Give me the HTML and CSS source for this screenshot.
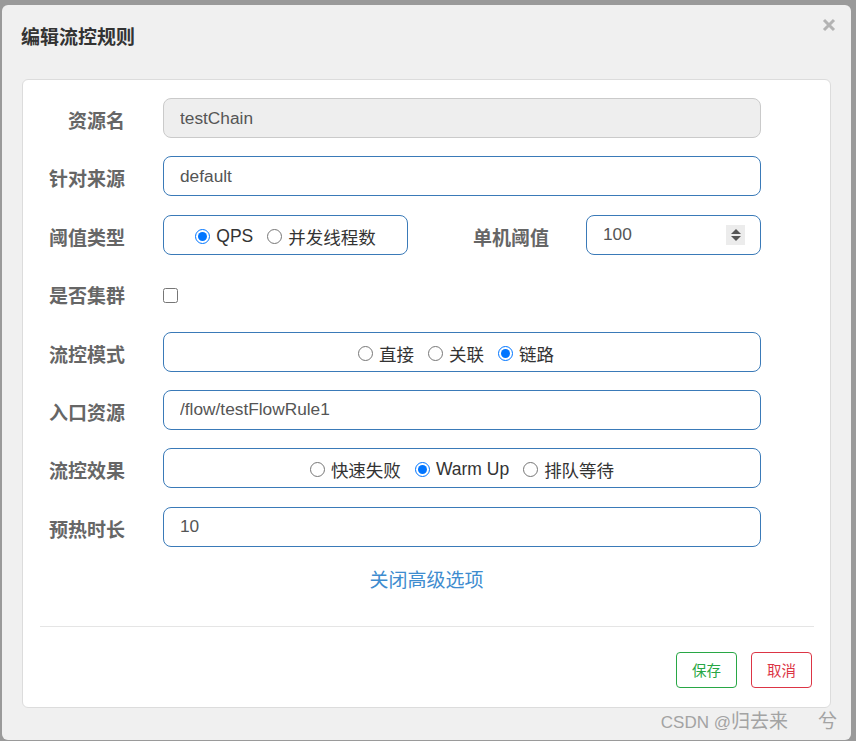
FILE: index.html
```html
<!DOCTYPE html>
<html lang="zh-CN">
<head>
<meta charset="utf-8">
<title>编辑流控规则</title>
<link rel="stylesheet" href="styles.css">
</head>
<body>
<div class="modal">
  <div class="modal-header">
    <h4 class="modal-title">编辑流控规则</h4>
    <span class="close"><svg width="14" height="14" viewBox="0 0 14 14"><path d="M2 2L12 12M12 2L2 12" stroke="#b3b3b3" stroke-width="3" stroke-linecap="butt"/></svg></span>
  </div>
  <div class="card">
    <form class="form">
      <div class="row">
        <label class="lbl">资源名</label>
        <input class="ctl disabled" value="testChain" readonly>
      </div>
      <div class="row">
        <label class="lbl">针对来源</label>
        <input class="ctl" value="default">
      </div>
      <div class="row">
        <label class="lbl">阈值类型</label>
        <div class="split">
          <div class="radio-box narrow">
            <label class="opt"><input type="radio" name="grade" checked>QPS</label>
            <label class="opt"><input type="radio" name="grade">并发线程数</label>
          </div>
          <label class="lbl sub">单机阈值</label>
          <div class="num-wrap">
            <input class="ctl" value="100">
            <span class="spin"></span>
          </div>
        </div>
      </div>
      <div class="row">
        <label class="lbl">是否集群</label>
        <div class="check-cell"><input type="checkbox" class="chk"></div>
      </div>
      <div class="row">
        <label class="lbl">流控模式</label>
        <div class="radio-box shifted">
          <label class="opt"><input type="radio" name="strategy">直接</label>
          <label class="opt"><input type="radio" name="strategy">关联</label>
          <label class="opt"><input type="radio" name="strategy" checked>链路</label>
        </div>
      </div>
      <div class="row">
        <label class="lbl">入口资源</label>
        <input class="ctl" value="/flow/testFlowRule1">
      </div>
      <div class="row">
        <label class="lbl">流控效果</label>
        <div class="radio-box">
          <label class="opt"><input type="radio" name="behavior">快速失败</label>
          <label class="opt"><input type="radio" name="behavior" checked>Warm Up</label>
          <label class="opt"><input type="radio" name="behavior">排队等待</label>
        </div>
      </div>
      <div class="row last">
        <label class="lbl">预热时长</label>
        <input class="ctl" value="10">
      </div>
    </form>
    <div class="toggle"><a class="toggle-link">关闭高级选项</a></div>
    <hr class="divider">
    <div class="footer">
      <button class="btn save" type="button">保存</button>
      <button class="btn cancel" type="button">取消</button>
    </div>
  </div>
  <div class="watermark"><span class="wm-latin">CSDN @</span>归去来<span class="wm-gap">　</span>兮</div>
</div>
</body>
</html>
```
FILE: styles.css
```css
html, body {
  margin: 0;
  padding: 0;
}
body {
  background: #9a9a9a;
  height: 741px;
  overflow: hidden;
  font-family: "Liberation Sans", "Noto Sans CJK SC", sans-serif;
}
.modal {
  margin: 5px 0 0 2px;
  width: 849px;
  height: 735px;
  background: #f0f0f0;
  border-radius: 6px;
  display: flex;
  flex-direction: column;
}
.modal-header {
  height: 74px;
  box-sizing: border-box;
  display: flex;
  justify-content: space-between;
  align-items: flex-start;
  padding: 0 15px 0 19px;
}
.modal-title {
  margin: 0;
  padding-top: 21px;
  font-size: 19px;
  line-height: 20px;
  font-weight: bold;
  color: #333;
  font-family: "Noto Sans CJK SC", sans-serif;
}
.close {
  display: block;
  margin-top: 13px;
  width: 14px;
  height: 14px;
}
.close svg { display: block; }
.card {
  margin: 0 20px;
  height: 629px;
  box-sizing: border-box;
  background: #fff;
  border: 1px solid #dcdcdc;
  border-radius: 6px;
  padding-top: 18px;
}
.form {
  margin: 0;
  padding-right: 69px;
}
.row {
  display: grid;
  grid-template-columns: 102px 598px;
  column-gap: 38px;
  height: 40px;
  align-items: center;
  margin-bottom: 18.4px;
}
.row.last { margin-bottom: 0; }
.lbl {
  text-align: right;
  font-family: "Noto Sans CJK SC", sans-serif;
  font-weight: bold;
  font-size: 19px;
  color: #666;
  padding-top: 4px;
  line-height: 24px;
}
.ctl {
  box-sizing: border-box;
  width: 100%;
  height: 40px;
  margin: 0;
  border: 1px solid #3a7ab8;
  border-radius: 8px;
  padding: 0 16px;
  font-family: "Liberation Sans", "Noto Sans CJK SC", sans-serif;
  font-size: 17.3px;
  color: #555;
  background: #fff;
  outline: none;
}
.ctl.disabled {
  background: #eee;
  border-color: #cacaca;
}
.split {
  display: flex;
  align-items: center;
  height: 40px;
}
.radio-box {
  box-sizing: border-box;
  height: 40px;
  border: 1px solid #3a7ab8;
  border-radius: 8px;
  display: flex;
  justify-content: center;
  align-items: center;
  padding-top: 3px;
}
.radio-box.shifted {
  padding-right: 12px;
}
.radio-box.narrow {
  width: 245px;
  flex: none;
}
.opt {
  display: inline-flex;
  align-items: center;
  margin: 0 7px;
  font-size: 17.5px;
  color: #333;
  font-family: "Liberation Sans", "Noto Sans CJK SC", sans-serif;
}
.opt input {
  width: 15px;
  height: 15px;
  margin: 0 6px 0 0;
}
.lbl.sub {
  flex: 1;
  padding-right: 37px;
}
.num-wrap {
  position: relative;
  width: 175px;
  flex: none;
}
.spin {
  position: absolute;
  right: 16px;
  top: 10px;
  width: 19px;
  height: 20px;
  background: #ececec;
}
.spin::before,
.spin::after {
  content: "";
  position: absolute;
  left: 5px;
  width: 0;
  height: 0;
  border-left: 5px solid transparent;
  border-right: 5px solid transparent;
}
.spin::before {
  top: 4px;
  border-bottom: 5px solid #555;
}
.spin::after {
  top: 11px;
  border-top: 5px solid #555;
}
.check-cell {
  display: flex;
  align-items: center;
  height: 40px;
}
.chk {
  width: 15px;
  height: 15px;
  margin: 4px 0 0 0;
}
.toggle {
  text-align: center;
  margin-top: 20px;
  line-height: 24px;
}
.toggle-link {
  font-family: "Noto Sans CJK SC", sans-serif;
  font-size: 19px;
  color: #3e8ccf;
  text-decoration: none;
}
.divider {
  margin: 32px 16px 0 17px;
  border: 0;
  border-top: 1px solid #e5e5e5;
  height: 0;
}
.footer {
  display: flex;
  justify-content: flex-end;
  gap: 14px;
  padding-right: 18px;
  margin-top: 25px;
}
.btn {
  width: 61px;
  height: 36px;
  box-sizing: border-box;
  background: #fff;
  border-radius: 4px;
  font-family: "Noto Sans CJK SC", sans-serif;
  font-size: 14.5px;
  padding: 0;
}
.btn.save {
  border: 1px solid #28a745;
  color: #28a745;
}
.btn.cancel {
  border: 1px solid #dc3545;
  color: #dc3545;
}
.watermark {
  text-align: right;
  padding-right: 14px;
  margin-top: 2px;
  line-height: 24px;
  font-size: 19px;
  color: #a3a3a3;
  font-family: "Liberation Sans", "Noto Sans CJK SC", sans-serif;
}
.wm-latin {
  font-size: 17px;
}
.wm-gap {
  display: inline-block;
  width: 30px;
}
```
